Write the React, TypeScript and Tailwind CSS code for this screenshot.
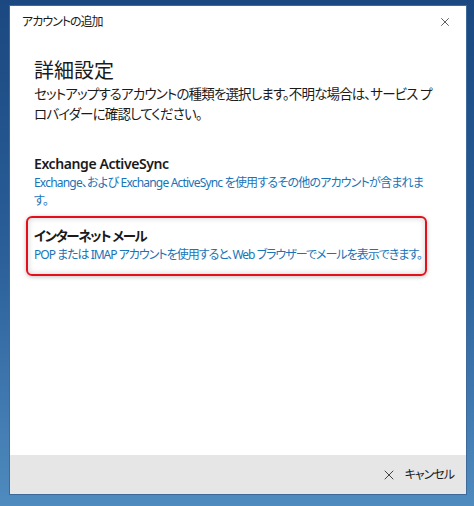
import { X } from 'lucide-react';

const font = "[font-family:'Noto_Sans','Noto_Sans_CJK_JP',sans-serif] [font-feature-settings:'palt']";

export default function App() {
  return (
    <div className="flex h-[506px] w-[474px] bg-[linear-gradient(180deg,#1b4880_0%,#2a5f98_50%,#4f8bbf_100%)] pl-[10px] pt-[6px]">
      <div className={`flex h-[488px] w-[456px] flex-col bg-white text-[#1a1a1a] shadow-[0_0_0_1px_#3d6a9a] ${font}`}>
        <div className="flex h-[32px] items-center justify-between pl-[12px] pr-[14px]">
          <span className="text-[12px] tracking-[-1px]">アカウントの追加</span>
          <X className="h-[14px] w-[14px]" strokeWidth={1.2} />
        </div>

        <div className="flex-1 whitespace-nowrap px-[24px] pt-[20px]">
          <h1 className="text-[20px] leading-[26px]">詳細設定</h1>
          <p className="text-[13.5px] leading-[20px] tracking-[-0.85px]">
            セットアップするアカウントの種類を選択します。不明な場合は、サービス プ
            <br />
            ロバイダーに確認してください。
          </p>

          <div className="mt-[30px]">
            <p className="text-[14px] font-semibold leading-[20px] tracking-[-0.4px]">Exchange ActiveSync</p>
            <p className="text-[12px] leading-[18px] tracking-[-0.8px] text-[#1874b8]">
              Exchange、および Exchange ActiveSync を使用するその他のアカウントが含まれま
              <br />
              す。
            </p>
          </div>

          <div className="-mx-[8px] mt-[6px] w-[401px] rounded-[6px] border-2 border-[#e3101c] px-[6px] pb-[10px] pt-[8px] shadow-[inset_0_0_6px_rgba(0,0,0,0.18),0_1px_4px_rgba(0,0,0,0.25)]">
            <p className="text-[13.5px] font-semibold leading-[20px] tracking-[-1.4px]">インターネット メール</p>
            <p className="text-[12px] leading-[18px] tracking-[-1px] text-[#1874b8]">
              POP または IMAP アカウントを使用すると、Web ブラウザーでメールを表示できます。
            </p>
          </div>
        </div>

        <div className="flex h-[39px] items-center justify-end gap-[8px] bg-[#e6e6e6] pr-[12px]">
          <X className="h-[16px] w-[16px]" strokeWidth={1.2} />
          <span className="text-[12px] tracking-[-1px]">キャンセル</span>
        </div>
      </div>
    </div>
  );
}
